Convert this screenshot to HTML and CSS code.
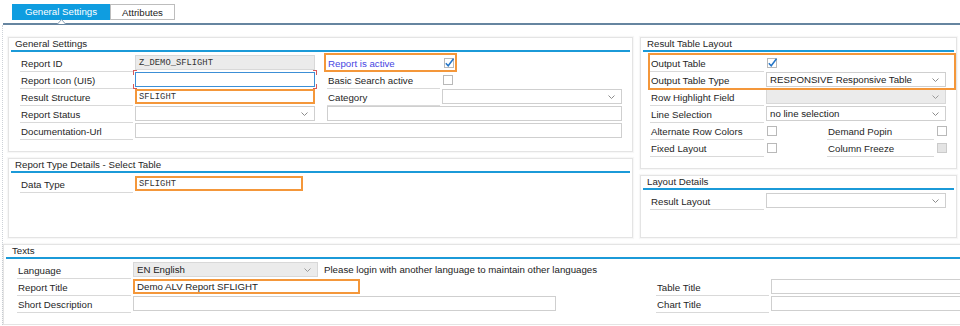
FILE: index.html
```html
<!DOCTYPE html>
<html lang="en">
<head>
  <meta charset="UTF-8" />
  <title>Report Settings</title>
  <link rel="stylesheet" href="styles.css">
</head>
<body>

  <div class="tabs">
    <div class="tab active">General Settings</div>
    <div class="tab plain">Attributes</div>
  </div>
  <div class="tab-line">
    <svg class="caret" width="9" height="6" viewBox="0 0 9 6"><path d="M0.5 6 L4.5 1.5 L8.5 6" fill="#fff" stroke="#8aa2b8"/></svg>
  </div>

  <div class="main">
    <div class="columns">

      <!-- left column -->
      <div class="col">
        <section class="panel">
          <div class="panel-title">General Settings</div>
          <div class="rows rows-gs">
            <div class="row">
              <div class="lbl">Report ID</div>
              <div class="field disabled mono">Z_DEMO_SFLIGHT</div>
              <div class="hl check-pair">
                <div class="lbl link">Report is active</div>
                <span class="cb"><svg width="11" height="10" viewBox="0 0 11 10"><path d="M1.8 5.2 L4.2 7.8 L9.5 0.8" fill="none" stroke="#2475c7" stroke-width="1.5"/></svg></span>
              </div>
            </div>
            <div class="row">
              <div class="lbl">Report Icon (UI5)</div>
              <div class="field focus marked"></div>
              <div class="lbl c4">Basic Search active</div>
              <span class="cb c5"></span>
            </div>
            <div class="row">
              <div class="lbl">Result Structure</div>
              <div class="field orange mono">SFLIGHT</div>
              <div class="lbl c4">Category</div>
              <div class="field select c5"><span></span><svg width="7" height="4" viewBox="0 0 7 4"><path d="M0.5 0.5 L3.5 3.5 L6.5 0.5" fill="none" stroke="#8c8c8c"/></svg></div>
            </div>
            <div class="row">
              <div class="lbl">Report Status</div>
              <div class="field select"><span></span><svg width="7" height="4" viewBox="0 0 7 4"><path d="M0.5 0.5 L3.5 3.5 L6.5 0.5" fill="none" stroke="#8c8c8c"/></svg></div>
              <div class="field span-right"></div>
            </div>
            <div class="row">
              <div class="lbl">Documentation-Url</div>
              <div class="field span-all"></div>
            </div>
          </div>
        </section>

        <section class="panel grow">
          <div class="panel-title">Report Type Details - Select Table</div>
          <div class="rows rows-rt">
            <div class="row">
              <div class="lbl">Data Type</div>
              <div class="field orange mono">SFLIGHT</div>
            </div>
          </div>
        </section>
      </div>

      <!-- right column -->
      <div class="col">
        <section class="panel">
          <div class="panel-title">Result Table Layout</div>
          <div class="rows rows-rtl">
            <div class="hl">
              <div class="row">
                <div class="lbl">Output Table</div>
                <span class="cb"><svg width="11" height="10" viewBox="0 0 11 10"><path d="M1.8 5.2 L4.2 7.8 L9.5 0.8" fill="none" stroke="#2475c7" stroke-width="1.5"/></svg></span>
              </div>
              <div class="row">
                <div class="lbl">Output Table Type</div>
                <div class="field select"><span>RESPONSIVE Responsive Table</span><svg width="7" height="4" viewBox="0 0 7 4"><path d="M0.5 0.5 L3.5 3.5 L6.5 0.5" fill="none" stroke="#8c8c8c"/></svg></div>
              </div>
            </div>
            <div class="row">
              <div class="lbl">Row Highlight Field</div>
              <div class="field select disabled"><span></span><svg width="7" height="4" viewBox="0 0 7 4"><path d="M0.5 0.5 L3.5 3.5 L6.5 0.5" fill="none" stroke="#9a9a9a"/></svg></div>
            </div>
            <div class="row">
              <div class="lbl">Line Selection</div>
              <div class="field select"><span>no line selection</span><svg width="7" height="4" viewBox="0 0 7 4"><path d="M0.5 0.5 L3.5 3.5 L6.5 0.5" fill="none" stroke="#8c8c8c"/></svg></div>
            </div>
            <div class="row row-checks">
              <div class="lbl">Alternate Row Colors</div>
              <span class="cb"></span>
              <div class="lbl">Demand Popin</div>
              <span class="cb"></span>
            </div>
            <div class="row row-checks">
              <div class="lbl">Fixed Layout</div>
              <span class="cb"></span>
              <div class="lbl">Column Freeze</div>
              <span class="cb off"></span>
            </div>
          </div>
        </section>

        <section class="panel grow">
          <div class="panel-title">Layout Details</div>
          <div class="rows rows-rtl">
            <div class="row">
              <div class="lbl">Result Layout</div>
              <div class="field select"><span></span><svg width="7" height="4" viewBox="0 0 7 4"><path d="M0.5 0.5 L3.5 3.5 L6.5 0.5" fill="none" stroke="#8c8c8c"/></svg></div>
            </div>
          </div>
        </section>
      </div>
    </div>

    <section class="panel texts">
      <div class="panel-title">Texts</div>
      <div class="rows rows-texts">
        <div class="row">
          <div class="lbl">Language</div>
          <div class="inline">
            <div class="field select disabled w-lang"><span>EN English</span><svg width="7" height="4" viewBox="0 0 7 4"><path d="M0.5 0.5 L3.5 3.5 L6.5 0.5" fill="none" stroke="#9a9a9a"/></svg></div>
            <span class="note">Please login with another language to maintain other languages</span>
          </div>
        </div>
        <div class="row">
          <div class="lbl">Report Title</div>
          <div class="inline"><div class="field orange w-title">Demo ALV Report SFLIGHT</div></div>
          <div class="lbl">Table Title</div>
          <div class="field"></div>
        </div>
        <div class="row">
          <div class="lbl">Short Description</div>
          <div class="inline"><div class="field w-desc"></div></div>
          <div class="lbl">Chart Title</div>
          <div class="field"></div>
        </div>
      </div>
    </section>
  </div>

</body>
</html>
```

FILE: styles.css
```css
/* Base */
body {
  margin: 0;
  background: #fff;
  font-family: "Liberation Sans", Arial, sans-serif;
  font-size: 9.7px;
  color: #262626;
  overflow: hidden;
}

/* Tab strip */
.tabs {
  display: flex;
  padding: 4px 0 0 12px;
  height: 16px;
}
.tab {
  box-sizing: border-box;
  height: 16px;
  line-height: 15px;
  text-align: center;
}
.tab.active {
  width: 98px;
  background: #0f9de0;
  color: #fff;
}
.tab.plain {
  width: 65px;
  border: 1px solid #bdbdbd;
  color: #222;
}
.tab-line {
  position: relative;
  margin: 3px 0 0 3px;
  height: 2px;
  background: #6685a0;
}
.caret {
  position: absolute;
  left: 54px;
  top: -5px;
}

/* Page body */
.main {
  margin-left: 2px;
  border-left: 1px dotted #cdd2d8;
  padding: 12px 0 0 5px;
}
.columns {
  display: grid;
  grid-template-columns: 625px 317px;
  column-gap: 7px;
  min-height: 201px;
}
.col {
  display: flex;
  flex-direction: column;
  gap: 6px;
}

/* Panels */
.panel {
  border: 1px solid #e4e4e4;
  box-shadow: 0 0 1px 1px rgba(0,0,0,0.03);
  background: #fff;
  padding: 0 2px 11px;
}
.panel.grow {
  flex: 1;
}
.panel-title {
  height: 12px;
  line-height: 12px;
  padding-left: 4px;
  border-bottom: 2px solid #1b9ad8;
  color: #262626;
  white-space: nowrap;
}
.panel.texts {
  margin: 6px -20px 0 -5px;
}
.panel.texts .panel-title {
  padding-left: 6px;
}

.rows {
  padding-top: 3px;
}
.rows-gs, .rows-rt { padding-left: 9px; }
.rows-rtl { padding-left: 7px; }
.rows-texts { padding-left: 11px; }

.row {
  display: grid;
  height: 17px;
  align-items: start;
}
.rows-gs .row { grid-template-columns: 115px 180px 12px 115px 180px; }
.rows-rt .row { grid-template-columns: 115px 168px; }
.rows-rtl .row { grid-template-columns: 116px 180px; }
.rows-rtl .row-checks { grid-template-columns: 116px 61px 109px 11px; }
.rows-texts .row { grid-template-columns: 116px 523px 115px 1fr; }

/* Labels */
.lbl {
  box-sizing: border-box;
  height: 17px;
  line-height: 17px;
  margin-right: 2px;
  padding-left: 1px;
  border-bottom: 1px solid #d9d9d9;
  white-space: nowrap;
  overflow: hidden;
}
.lbl.link {
  color: #4646e2;
}
.c4 { grid-column: 4; }
.c5 { grid-column: 5; }

/* Input fields */
.field {
  box-sizing: border-box;
  height: 15px;
  border: 1px solid #cfcfcf;
  background: #fff;
  padding: 0 3px;
  display: flex;
  align-items: center;
  white-space: nowrap;
  color: #222;
}
.field.disabled {
  background: #ebebeb;
  border-color: #d8d8d8;
}
.field.mono {
  font-family: "Liberation Mono", "Courier New", monospace;
  font-size: 8.8px;
  color: #333;
}
.field.orange {
  border: 2px solid #f4973a;
  padding-left: 2px;
}
.field.focus {
  border-color: #3c8fd6;
}
.field.select span {
  flex: 1;
  overflow: hidden;
}
.field.select svg {
  margin: 0 3px 0 4px;
  flex: none;
}
.span-right { grid-column: 4 / 6; }
.span-all { grid-column: 2 / 6; }

/* Red corner marks around a field */
.marked {
  position: relative;
}
.marked::before {
  content: "";
  position: absolute;
  inset: -3px;
  pointer-events: none;
  background:
    linear-gradient(#d55a5a, #d55a5a) left top / 1px 5px no-repeat,
    linear-gradient(#d55a5a, #d55a5a) left top / 4px 1px no-repeat,
    linear-gradient(#d55a5a, #d55a5a) left bottom / 1px 5px no-repeat,
    linear-gradient(#d55a5a, #d55a5a) left bottom / 4px 1px no-repeat,
    linear-gradient(#d55a5a, #d55a5a) right top / 1px 5px no-repeat,
    linear-gradient(#d55a5a, #d55a5a) right top / 4px 1px no-repeat,
    linear-gradient(#d55a5a, #d55a5a) right bottom / 1px 5px no-repeat,
    linear-gradient(#d55a5a, #d55a5a) right bottom / 4px 1px no-repeat;
}

/* Orange highlight frame */
.hl {
  position: relative;
}
.hl::after {
  content: "";
  position: absolute;
  inset: -2px -2px -1px -2px;
  border: 2px solid #f4973a;
  pointer-events: none;
}
.check-pair {
  grid-column: 4 / 6;
  width: 127px;
  height: 17px;
  display: grid;
  grid-template-columns: 116px 11px;
}
.check-pair::after {
  inset: -2px -3px 0 -3px;
}
.check-pair .lbl {
  border-bottom: none;
}

/* Checkboxes */
.cb {
  box-sizing: border-box;
  display: block;
  width: 10px;
  height: 10px;
  margin: 3px 0 0 1px;
  border: 1px solid #b9b9b9;
  background: #fff;
  position: relative;
}
.cb svg {
  display: block;
  margin: -1px 0 0 -1px;
}
.cb.off {
  background: #e4e4e4;
  border-color: #cbcbcb;
}

/* Texts panel */
.inline {
  display: flex;
  align-items: center;
}
.w-lang { width: 185px; }
.w-title { width: 227px; }
.w-desc { width: 423px; }
.note {
  margin-left: 6px;
  white-space: nowrap;
  color: #222;
}
```
